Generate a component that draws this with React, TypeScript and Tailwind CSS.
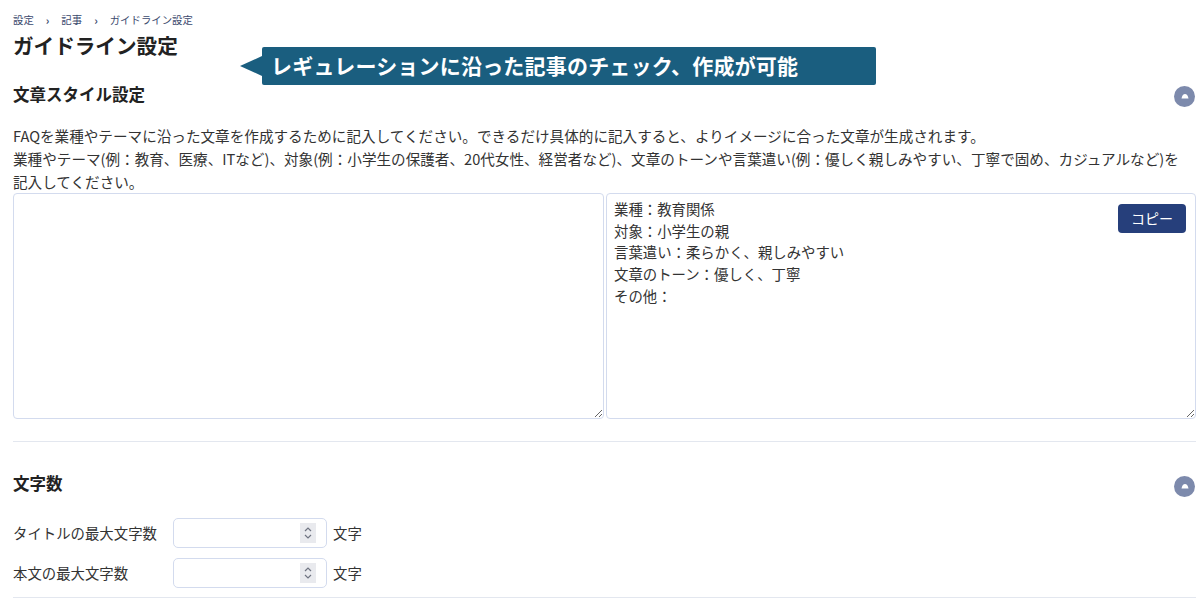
import React from 'react';

const font = { fontFamily: '"Noto Sans CJK JP", "Noto Sans", sans-serif' };

const CollapseButton: React.FC = () => (
  <button className="flex h-[21px] w-[21px] items-center justify-center rounded-full bg-[#7d8aac]">
    <svg width="10" height="6" viewBox="0 0 10 6">
      <path d="M1.5 5.5 C2 2.2 3.5 1 5 1 C6.5 1 8 2.2 8.5 5.5 Z" fill="#fff" />
    </svg>
  </button>
);

const Spinner: React.FC = () => (
  <div className="absolute right-[10px] top-1/2 flex h-[20px] w-[16px] -translate-y-1/2 items-center justify-center bg-[#e9eaee]">
    <svg width="10" height="14" viewBox="0 0 10 14" fill="none" stroke="#6f7482" strokeWidth="1.2">
      <path d="M2 5 L5 2 L8 5" />
      <path d="M2 9 L5 12 L8 9" />
    </svg>
  </div>
);

const NumberRow: React.FC<{ label: string }> = ({ label }) => (
  <div className="flex items-center">
    <div className="w-[160px] text-[14.4px] leading-[20px] text-[#333]">{label}</div>
    <div className="relative h-[30px] w-[154px] rounded-[5px] border border-[#d3dbee] bg-white">
      <Spinner />
    </div>
    <span className="ml-[6px] text-[14.4px] leading-[20px] text-[#333]">文字</span>
  </div>
);

const sampleText = `業種：教育関係
対象：小学生の親
言葉遣い：柔らかく、親しみやすい
文章のトーン：優しく、丁寧
その他：`;

const App: React.FC = () => {
  return (
    <div className="relative min-h-[602px] w-[1200px] bg-white pl-[13px] pr-[4px] pt-[13px]" style={font}>
      {/* breadcrumb */}
      <div className="flex items-center gap-[12px] text-[10.4px] leading-[14px] text-[#3b4a6e]">
        <span>設定</span>
        <span className="text-[11px] font-bold">›</span>
        <span>記事</span>
        <span className="text-[11px] font-bold">›</span>
        <span>ガイドライン設定</span>
      </div>
      <h1 className="mt-[4px] text-[20.6px] font-bold leading-[28px] text-[#222]">ガイドライン設定</h1>

      {/* callout annotation */}
      <div className="absolute left-[240px] top-[47px] flex items-center">
        <div className="h-0 w-0 border-y-[10px] border-r-[22px] border-y-transparent border-r-[#1a5e7f]" />
        <div className="flex h-[38px] w-[614px] items-center rounded-[2px] bg-[#1a5e7f] pl-[9px] text-[21px] font-bold tracking-[0.2px] text-white">
          レギュレーションに沿った記事のチェック、作成が可能
        </div>
      </div>

      {/* 文章スタイル設定 */}
      <div className="mt-[21px] flex h-[28px] items-center justify-between pr-[1px]">
        <h2 className="text-[16.5px] font-bold leading-[28px] text-[#222]">文章スタイル設定</h2>
        <div className="mt-[4px]"><CollapseButton /></div>
      </div>
      <p className="mt-[16px] text-[14.6px] leading-[23px] text-[#333]">
        FAQを業種やテーマに沿った文章を作成するために記入してください。できるだけ具体的に記入すると、よりイメージに合った文章が生成されます。
        <br />
        業種やテーマ(例：教育、医療、ITなど)、対象(例：小学生の保護者、20代女性、経営者など)、文章のトーンや言葉遣い(例：優しく親しみやすい、丁寧で固め、カジュアルなど)を
        <br />
        記入してください。
      </p>
      <div className="flex gap-[2px]">
        <textarea
          className="block h-[226px] w-[591px] resize rounded-[4px] border border-[#d3dbee] bg-white outline-none"
          style={font}
        />
        <div className="relative">
          <textarea
            readOnly
            defaultValue={sampleText}
            className="block h-[226px] w-[590px] resize rounded-[4px] border border-[#d3dbee] bg-white px-[7px] pt-[4px] text-[14.4px] leading-[21.7px] text-[#333] outline-none"
            style={font}
          />
          <button className="absolute right-[10px] top-[11px] flex h-[29px] w-[68px] items-center justify-center rounded-[4px] bg-[#263f7b] text-[14px] text-white">
            コピー
          </button>
        </div>
      </div>

      <div className="mt-[22px] border-t border-[#e3e7ef]" />

      {/* 文字数 */}
      <div className="mt-[27px] flex h-[28px] items-center justify-between pr-[1px]">
        <h2 className="text-[16.5px] font-bold leading-[28px] text-[#222]">文字数</h2>
        <div className="mt-[6px]"><CollapseButton /></div>
      </div>
      <div className="mt-[21px] flex flex-col gap-[10px]">
        <NumberRow label="タイトルの最大文字数" />
        <NumberRow label="本文の最大文字数" />
      </div>
      <div className="mt-[9px] border-t border-[#e3e7ef]" />
    </div>
  );
};

export default App;
